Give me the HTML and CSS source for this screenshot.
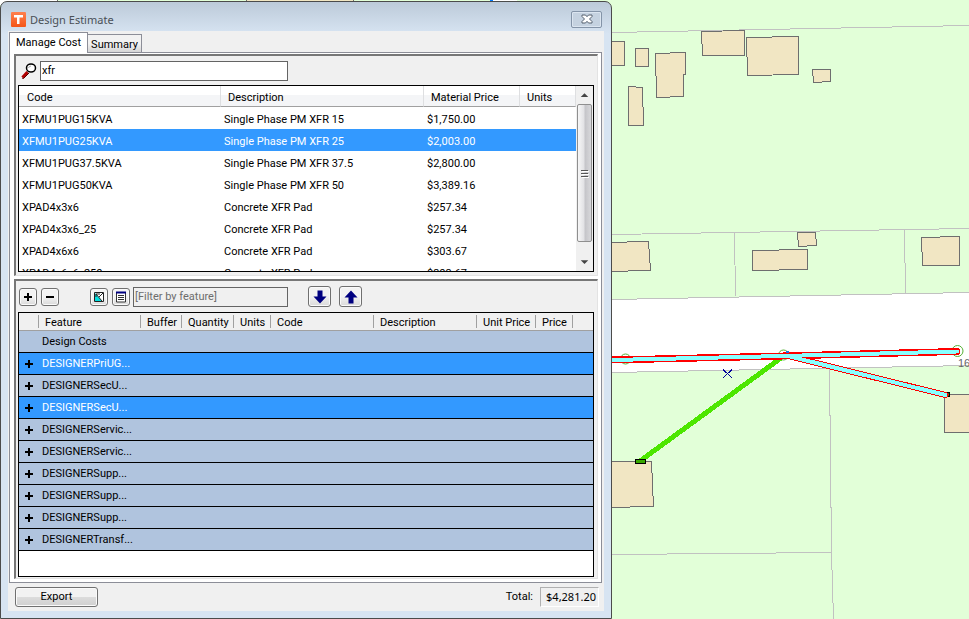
FILE: index.html
```
<!DOCTYPE html>
<html lang="en">
<head>
<meta charset="utf-8">
<title>Design Estimate</title>
<link rel="stylesheet" href="styles.css">
</head>
<body>
<svg class="map" viewBox="0 0 969 619" preserveAspectRatio="xMinYMin slice" shape-rendering="crispEdges" aria-label="Parcel map">
  <rect width="969" height="619" fill="#e2ffd8"/>
  <path fill="#fff" d="M0 0H57V5H0ZM493 0H517V5H493ZM612 299 969 292V365L612 373Z"/>
  <path fill="#6e6e6e" d="M57 0h1v3h-1zM246 0h1v3h-1zM353 0h1v3h-1z"/>
  <path fill="#f1e6c3" d="M247 0h106v3H247z"/>
  <path fill="#007bff" d="M490 0h3v3h-3z"/>
  <path fill="none" stroke="#c1c1c1" d="M612 32.5 969 25.5M612 234.5 969 228.5M734.5 232.5 735.5 296.5M904.500 229.500 905.500 294.500M612 299.500 969 292.500M612 372.500 969 365.500M829.500 369.500 831.500 553 833.500 619M612 554.500 831 552.500"/>
  <g fill="#f1e6c3" stroke="#6e6e6e">
    <path d="M606.500 41.500H624.500V65.500H606.500Z"/>
    <path d="M635.500 48.500H648.500V66.500H635.500Z"/>
    <path d="M655.500 53.500 685.500 52.500V74.500H683.500V96.500L656.500 97.500Z"/>
    <path d="M628.500 86.500 642.500 87.500 643.500 125.500H628.500Z"/>
    <path d="M701.500 31.500 744.500 30.500V55.500H702.500Z"/>
    <path d="M746.500 37.500 798.500 36.500V74.500L747.500 75.500Z"/>
    <path d="M812.500 69.500H830.500V81.500L813.500 82.500Z"/>
    <path d="M606.500 242.500 648.500 241.500 650.500 270.500 606.500 271.500Z"/>
    <path d="M752.500 250.500 807.500 249.500V269.500L752.500 270.500Z"/>
    <path d="M797.500 232.500H815.500L816.500 245.500 798.500 246.500Z"/>
    <path d="M921.500 237.500 959.500 236.500V265.500H922.500Z"/>
    <path d="M606.500 461.500H651.500L653.500 506.500 606.500 507.500Z"/>
    <path d="M944.500 394.500H975V432.500H944.500Z"/>
  </g>
  <g fill="none" stroke="#55b135" shape-rendering="auto">
    <circle cx="625.500" cy="359" r="5"/>
    <circle cx="783.500" cy="355" r="5"/>
    <circle cx="957.500" cy="351" r="5.500"/>
  </g>
  <path d="M640 461 781 358" stroke="#4de600" stroke-width="5"/>
  <path d="M946 392h3v4h-3z" fill="#187a18" stroke="#000"/>
  <path d="M788 356 945.500 395" stroke="#f00" stroke-width="6" stroke-linecap="round"/>
  <path d="M612 360 783 356 957 351.500" stroke="#f00" stroke-width="7" fill="none" stroke-linecap="round"/>
  <path d="M612 360 783 356 957 351.500" stroke="#8ff" stroke-width="4" fill="none" stroke-linecap="round"/>
  <path d="M788 356 945.500 395" stroke="#8ff" stroke-width="4" stroke-linecap="round"/>
  <path d="M786 351h3v2h-3z" fill="#1c6fe0"/>
  <path d="M635.500 459.500h10v4h-10z" fill="#38a800" stroke="#000"/>
  <path d="M723 369.500 732 378M732 369.500 723 378" stroke="#00009b"/>
  <text x="958" y="367" class="map-label">16</text>
</svg>

<main class="desktop">
<section class="dialog" aria-labelledby="dialog-title">
  <header class="titlebar">
    <svg class="app-icon" viewBox="0 0 15 15" aria-hidden="true">
      <defs><linearGradient id="app" x2="0" y2="1"><stop stop-color="#ff8150"/><stop offset="1" stop-color="#f45518"/></linearGradient></defs>
      <rect width="15" height="15" rx="1" fill="url(#app)"/>
      <path d="M3 3H12V5.500H8.500V12H6V5.500H3Z" fill="#fff"/>
    </svg>
    <h1 id="dialog-title">Design Estimate</h1>
    <button class="close" type="button" aria-label="Close">
      <svg viewBox="0 0 12 10" aria-hidden="true"><path d="M1 1H4.500L6 2.700 7.500 1H11V2.500L8.500 5 11 7.500V9H7.500L6 7.300 4.500 9H1V7.500L3.500 5 1 2.500Z" fill="#fff" stroke="#55606f"/></svg>
    </button>
  </header>

  <div class="client">
    <div class="tabs" role="tablist">
      <button class="tab active" type="button" role="tab" aria-selected="true">Manage Cost</button>
      <button class="tab" type="button" role="tab" aria-selected="false">Summary</button>
    </div>

    <div class="page">
      <div class="pane catalog">
        <div class="search">
          <label for="search" aria-label="Search">
            <svg class="lens" viewBox="0 0 16 16" aria-hidden="true">
              <path d="M1.500 14.500 6.500 9" stroke="#b00000" stroke-width="3"/>
              <path d="M1 15 2.500 15.500 8 10" stroke="#500" fill="none"/>
              <ellipse cx="10" cy="5" rx="4.500" ry="4" fill="#fff" stroke="#000" stroke-width="1.500"/>
              <path d="M7.500 5Q8 3 10 3" stroke="#aaa" fill="none"/>
            </svg>
          </label>
          <input id="search" class="field" type="text" value="xfr">
        </div>
        <div class="frame list">
          <div class="scroll">
            <table class="items">
              <colgroup><col class="c-code"><col class="c-desc"><col class="c-price"><col></colgroup>
              <thead><tr><th>Code</th><th>Description</th><th>Material Price</th><th>Units</th></tr></thead>
              <tbody>
                <tr><td>XFMU1PUG15KVA</td><td>Single Phase PM XFR 15</td><td>$1,750.00</td><td></td></tr>
                <tr class="selected"><td>XFMU1PUG25KVA</td><td>Single Phase PM XFR 25</td><td>$2,003.00</td><td></td></tr>
                <tr><td>XFMU1PUG37.5KVA</td><td>Single Phase PM XFR 37.5</td><td>$2,800.00</td><td></td></tr>
                <tr><td>XFMU1PUG50KVA</td><td>Single Phase PM XFR 50</td><td>$3,389.16</td><td></td></tr>
                <tr><td>XPAD4x3x6</td><td>Concrete XFR Pad</td><td>$257.34</td><td></td></tr>
                <tr><td>XPAD4x3x6_25</td><td>Concrete XFR Pad</td><td>$257.34</td><td></td></tr>
                <tr><td>XPAD4x6x6</td><td>Concrete XFR Pad</td><td>$303.67</td><td></td></tr>
                <tr><td>XPAD4x6x6_250</td><td>Concrete XFR Pad</td><td>$303.67</td><td></td></tr>
              </tbody>
            </table>
          </div>
          <div class="scrollbar" aria-hidden="true">
            <svg class="arrow" viewBox="0 0 16 18"><path d="M4 11 8 7 12 11Z" fill="#444"/></svg>
            <div class="thumb"><svg viewBox="0 0 8 9"><path d="M0 1.500H7M0 4.500H7M0 7.500H7" stroke="#555"/><path d="M1 2.500H8M1 5.500H8M1 8.500H8" stroke="#fff"/></svg></div>
            <svg class="arrow" viewBox="0 0 16 18"><path d="M4 7 8 11 12 7Z" fill="#444"/></svg>
          </div>
        </div>
      </div>

      <div class="pane costs">
        <div class="toolbar">
          <div class="group">
            <button class="tool" type="button" aria-label="Add"><svg viewBox="0 0 16 16"><path d="M4 8H12M8 4V12" stroke="#000" stroke-width="2"/></svg></button>
            <button class="tool" type="button" aria-label="Remove"><svg viewBox="0 0 16 16"><path d="M4 8H12" stroke="#000" stroke-width="2"/></svg></button>
          </div>
          <div class="group filter">
            <button class="tool" type="button" aria-label="Select feature"><svg viewBox="0 0 16 16"><path d="M3.500 3.500H12.500V12.500H3.500Z" fill="#fff" stroke="#222"/><path d="M4 4V12H11Z" fill="#00dede"/><path d="M5 5 11 12M5 5H9M5 5V8M8 8 12 4" stroke="#222" fill="none"/></svg></button>
            <button class="tool" type="button" aria-label="Show list"><svg viewBox="0 0 16 16"><path d="M3.500 3.500H12.500V13H3.500Z" fill="#fff" stroke="#333"/><path d="M3 3.500H13" stroke="#000080" stroke-width="2"/><path d="M5 6.500H11M5 8.500H11M5 10.500H11" stroke="#333"/></svg></button>
            <input class="field" type="text" placeholder="[Filter by feature]" aria-label="Filter by feature">
          </div>
          <div class="group moves">
            <button class="tool move" type="button" aria-label="Move down"><svg viewBox="0 0 16 16"><path d="M5.500 1.500H10.500V7.500H14.500L8 14.500 1.500 7.500H5.500Z" fill="#000080"/></svg></button>
            <button class="tool move" type="button" aria-label="Move up"><svg viewBox="0 0 16 16"><path d="M5.500 14.500H10.500V8.500H14.500L8 1.500 1.500 8.500H5.500Z" fill="#000080"/></svg></button>
          </div>
        </div>
        <div class="frame grid">
          <table class="features">
            <colgroup><col class="f-toggle"><col class="f-feature"><col class="f-buffer"><col class="f-quantity"><col class="f-units"><col class="f-wide"><col class="f-wide"><col class="f-unit-price"><col class="f-units"><col></colgroup>
            <thead><tr><th></th><th>Feature</th><th>Buffer</th><th>Quantity</th><th>Units</th><th>Code</th><th>Description</th><th>Unit Price</th><th>Price</th><th></th></tr></thead>
            <tbody>
              <tr><td></td><td colspan="9">Design Costs</td></tr>
              <tr class="selected"><td><button type="button" aria-label="Expand"></button></td><td colspan="9">DESIGNERPriUG...</td></tr>
              <tr><td><button type="button" aria-label="Expand"></button></td><td colspan="9">DESIGNERSecU...</td></tr>
              <tr class="selected"><td><button type="button" aria-label="Expand"></button></td><td colspan="9">DESIGNERSecU...</td></tr>
              <tr><td><button type="button" aria-label="Expand"></button></td><td colspan="9">DESIGNERServic...</td></tr>
              <tr><td><button type="button" aria-label="Expand"></button></td><td colspan="9">DESIGNERServic...</td></tr>
              <tr><td><button type="button" aria-label="Expand"></button></td><td colspan="9">DESIGNERSupp...</td></tr>
              <tr><td><button type="button" aria-label="Expand"></button></td><td colspan="9">DESIGNERSupp...</td></tr>
              <tr><td><button type="button" aria-label="Expand"></button></td><td colspan="9">DESIGNERSupp...</td></tr>
              <tr><td><button type="button" aria-label="Expand"></button></td><td colspan="9">DESIGNERTransf...</td></tr>
            </tbody>
          </table>
        </div>
      </div>
    </div>

    <footer class="footer">
      <button class="export" type="button">Export</button>
      <label for="total">Total:</label>
      <output id="total">$4,281.20</output>
    </footer>
  </div>
</section>
</main>
</body>
</html>
```
FILE: styles.css
```
* { box-sizing: border-box; }

body {
  margin: 0;
  overflow: hidden;
  font: 11px/14px Roboto, "Liberation Sans", Arial, sans-serif;
  color: #000;
  background: #e2ffd8;
}

button, input { font: inherit; color: inherit; margin: 0; }
button { padding: 0; }
svg { display: block; }

.map { position: absolute; inset: 0; width: 100%; height: 100%; }
.map-label { font: 11px "Liberation Sans", sans-serif; fill: #666; }

.desktop {
  position: relative;
  display: grid;
  grid-template-columns: minmax(0, 12fr) minmax(0, 7fr);
  height: 100vh;
  padding-top: 1px;
}

.dialog {
  display: flex;
  flex-direction: column;
  min-height: 0;
  padding: 0 7px 7px;
  border: 1px solid #4b4b4b;
  border-radius: 7px 7px 0 0;
  background: linear-gradient(#bccad9, #d7e4f2 32px);
}

.titlebar {
  display: flex;
  align-items: center;
  flex: none;
  gap: 4px;
  height: 29px;
  padding: 5px 2px 0 3px;
}
.app-icon { width: 15px; height: 15px; }
.titlebar h1 {
  flex: 1;
  margin: 0;
  padding-top: 2px;
  font: 11px/16px "Noto Sans", "Open Sans", sans-serif;
  color: #4a5057;
}
.close {
  display: grid;
  place-items: center;
  width: 31px;
  height: 17px;
  border: 1px solid #8494a8;
  border-radius: 2px;
  background: #c5d2e0;
  box-shadow: inset 0 0 0 1px #dbe5f0;
}
.close svg { width: 12px; height: 10px; }

.client {
  display: flex;
  flex-direction: column;
  flex: 1;
  min-height: 0;
  padding: 1px 2px 4px 1px;
  background: #f0f0f0;
}

.tabs { display: flex; align-items: flex-end; flex: none; height: 20px; }
.tab {
  height: 18px;
  padding: 2px 3px 0;
  border: 1px solid #8c8e98;
  border-left: 0;
  border-bottom: 0;
  background: linear-gradient(#f2f2f2 50%, #d5d5d5);
}
.tab.active {
  z-index: 1;
  height: 21px;
  margin-bottom: -1px;
  padding: 0 6px;
  border-left: 1px solid #8c8e98;
  background: #fff;
}

.page {
  display: flex;
  flex-direction: column;
  flex: 1;
  gap: 3px;
  min-height: 0;
  padding: 1px 3px 3px 4px;
  border: 1px solid #8c8e98;
  background: #fff;
}
.pane {
  display: flex;
  flex-direction: column;
  min-height: 0;
  padding: 4px 3px 3px 2px;
  border: 1px solid #e3e3e3;
  border-top: 2px solid #777;
  border-left: 2px solid #777;
  background: #f0f0f0;
}
.catalog { flex: 220 1 0; }
.costs { flex: 302 1 0; padding-bottom: 1px; }

.field {
  width: 248px;
  height: 20px;
  padding: 0 1px 2px;
  border: 1px solid #646464;
  border-radius: 0;
  background: #fff;
  outline: 0;
}
.filter .field { width: 155px; padding-bottom: 0; background: #f0f0f0; }
.field::placeholder { color: #6d6d6d; opacity: 1; }

.search { display: flex; align-items: center; flex: none; gap: 3px; padding: 1px 3px 4px; }
.lens { width: 16px; height: 16px; }

.frame { flex: 1; min-height: 0; overflow: hidden; border: 1px solid #000; background: #fff; }
.list { display: flex; }
.scroll { flex: 1; min-width: 0; overflow: hidden; }

table { width: 100%; table-layout: fixed; border-collapse: separate; border-spacing: 0; }
th, td { padding: 0; font-weight: normal; text-align: left; white-space: nowrap; overflow: hidden; }

.items th {
  height: 21px;
  padding: 3px 0 0 7px;
  border-right: 1px solid #dedfe1;
  border-bottom: 1px solid #a0a0a0;
  background: linear-gradient(#fff 45%, #f4f5f7 46%);
}
.items th:first-child { padding-left: 8px; }
.items td { height: 22px; padding: 4px 0 0 3px; }
.c-code { width: 202px; }
.c-desc { width: 203px; }
.c-price { width: 96px; }
.selected { background: #3399ff; color: #fff; }

.scrollbar {
  display: flex;
  flex-direction: column;
  flex: none;
  width: 17px;
  padding: 0 1px;
  background: #f0f0f0;
}
.arrow { width: 15px; height: 18px; }
.thumb {
  display: grid;
  place-items: center;
  height: 138px;
  border: 1px solid #8f8f8f;
  border-radius: 2px;
  background: linear-gradient(90deg, #f7f7f7, #e2e2e5 45%, #c5c5c9 55%, #d8d8db);
}
.thumb svg { width: 8px; height: 9px; }
.arrow:last-child { margin-top: auto; }

.toolbar { display: flex; align-items: center; flex: none; padding: 1px 0 5px 1px; }
.group { display: flex; align-items: center; gap: 4px; }
.filter { margin-left: 31px; }
.filter .field { margin-left: -1px; }
.moves { gap: 8px; margin-left: 20px; }
.tool {
  display: grid;
  place-items: center;
  width: 18px;
  height: 18px;
  border: 1px solid #707070;
  border-radius: 3px;
  background: linear-gradient(#f3f3f3 50%, #d9d9d9);
  box-shadow: inset 0 0 0 1px #fafafa;
}
.tool svg { width: 16px; height: 16px; }
.tool.move { width: 23px; height: 21px; }

.features th {
  height: 18px;
  padding: 3px 0 0 6px;
  border-bottom: 1px solid #a0a0a0;
  background: linear-gradient(#a0a0a0, #a0a0a0) right center / 1px 13px no-repeat #f0f0f0;
}
.features th:last-child { background: #f0f0f0; }
.features td { height: 22px; border-bottom: 1px solid #000; padding: 1px 0 0 3px; }
.features tbody tr { background: #b0c4de; }
.features tbody .selected { background: #3399ff; }
.f-toggle { width: 20px; }
.f-feature { width: 102px; }
.f-wide { width: 103px; }
.f-buffer { width: 41px; }
.f-quantity { width: 52px; }
.f-units { width: 37px; }
.f-unit-price { width: 59px; }
.features button {
  display: block;
  width: 14px;
  height: 14px;
  border: 0;
  background:
    linear-gradient(#000, #000) center / 8px 2px no-repeat,
    linear-gradient(#000, #000) center / 2px 8px no-repeat;
}

.footer { display: flex; align-items: center; flex: none; padding: 4px 3px 0 6px; }
.export {
  width: 83px;
  height: 20px;
  margin-right: auto;
  border: 1px solid #707070;
  border-radius: 3px;
  background: linear-gradient(#f2f2f2 50%, #dcdcdc 51%, #cfcfcf);
  box-shadow: inset 0 0 0 1px #fafafa;
}
.footer label { margin-right: 7px; }
.footer output {
  padding: 2px 2px 2px 5px;
  border: 1px solid #fff;
  border-top-color: #b0b0b0;
  border-left-color: #b0b0b0;
  font: 11px/14px "Noto Sans", sans-serif;
}
```
